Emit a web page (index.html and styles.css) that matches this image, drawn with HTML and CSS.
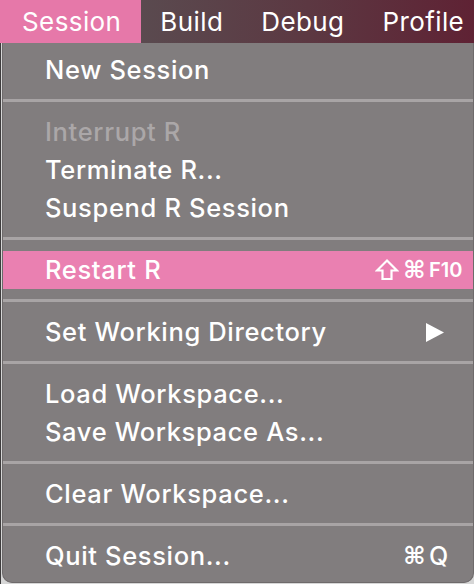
FILE: index.html
```html
<!DOCTYPE html>
<html>
<head>
<meta charset="utf-8">
<link rel="stylesheet" href="styles.css">
</head>
<body>
<div class="menubar">
  <div class="mb-item active">Session</div>
  <div class="mb-item">Build</div>
  <div class="mb-item">Debug</div>
  <div class="mb-item">Profile</div>
</div>
<div class="screen">
  <div class="menu">
    <div class="row"><span class="label">New Session</span></div>
    <div class="sep"></div>
    <div class="row disabled"><span class="label">Interrupt R</span></div>
    <div class="row"><span class="label">Terminate R...</span></div>
    <div class="row"><span class="label">Suspend R Session</span></div>
    <div class="sep"></div>
    <div class="row selected"><span class="label">Restart R</span>
      <span class="shortcut"><span class="mods"><svg class="shift" viewBox="0 0 24 24" width="24" height="24"><path d="M12 2.5 L22 12.5 L16.5 12.5 L16.5 21 L7.5 21 L7.5 12.5 L2 12.5 Z" fill="none" stroke="#fff" stroke-width="2.2" stroke-linejoin="miter"/></svg><span class="cmd">⌘</span></span><span class="key small">F10</span></span>
    </div>
    <div class="sep"></div>
    <div class="row"><span class="label">Set Working Directory</span>
      <span class="submenu"><svg viewBox="0 0 19 19" width="19" height="19"><path d="M1 0 L19 9.5 L1 19 Z" fill="#fff"/></svg></span>
    </div>
    <div class="sep"></div>
    <div class="row"><span class="label">Load Workspace...</span></div>
    <div class="row"><span class="label">Save Workspace As...</span></div>
    <div class="sep"></div>
    <div class="row"><span class="label">Clear Workspace...</span></div>
    <div class="sep"></div>
    <div class="row"><span class="label">Quit Session...</span>
      <span class="shortcut"><span class="mods"><span class="cmd">⌘</span></span><span class="key">Q</span></span>
    </div>
  </div>
</div>
</body>
</html>
```
FILE: styles.css
```css
* { box-sizing: border-box; }
html, body { margin: 0; padding: 0; }
body {
  width: 474px;
  height: 584px;
  overflow: hidden;
  background: #d6d6d6;
  font-family: Inter, "Noto Sans", "Liberation Sans", sans-serif;
  font-weight: 500;
  color: #fff;
}
.menubar {
  display: flex;
  height: 43px;
  align-items: stretch;
  background: linear-gradient(to right, #5b5055 0%, #5a4a4f 30%, #5c3842 65%, #5f2234 100%);
}
.mb-item {
  font-size: 26px;
  line-height: 43px;
  padding: 0 19px 0 19px;
  letter-spacing: 0.4px;
  font-weight: 400;
}
.mb-item:first-child { padding-left: 22px; padding-right: 20px; }
.mb-item.active { background: #e678a9; }
.screen {
  border-left: 1px solid #3e3c3d;
  padding-left: 1px;
  height: 541px;
}
.menu {
  width: 472px;
  height: 540px;
  background: #817d7e;
  border-left: 1px solid #6e6a6b;
  border-right: 1px solid #6e6a6b;
  border-bottom: 1px solid #6e6a6b;
  border-radius: 0 0 10px 10px;
  padding: 8px 0 7px 0;
  display: flex;
  flex-direction: column;
}
.row {
  height: 38px;
  display: flex;
  align-items: center;
  padding-left: 42px;
  font-size: 25.5px;
  letter-spacing: 0.65px;
  line-height: 36px;
}
.row .label { flex: 1; }
.row.disabled { color: #aba7a8; }
.row.selected { background: #ea80b1; }
.sep {
  height: 24px;
  padding: 10px 0 11px 0;
}
.sep::before {
  content: "";
  display: block;
  height: 3px;
  background: #a8a4a5;
}
.shortcut {
  display: flex;
  align-items: center;
  padding-right: 8px;
}
.mods {
  display: flex;
  align-items: center;
  gap: 4px;
}
.shift { display: block; }
.cmd {
  font-family: "DejaVu Sans", sans-serif;
  font-size: 24px;
  font-weight: bold;
  width: 23px;
  text-align: center;
  letter-spacing: 0;
}
.key {
  width: 36px;
  margin-left: 3px;
  font-size: 25px;
  letter-spacing: 0;
}
.key.small { font-size: 20px; font-weight: 600; }
.submenu {
  display: flex;
  padding-right: 29px;
}
.submenu svg { display: block; }
```
